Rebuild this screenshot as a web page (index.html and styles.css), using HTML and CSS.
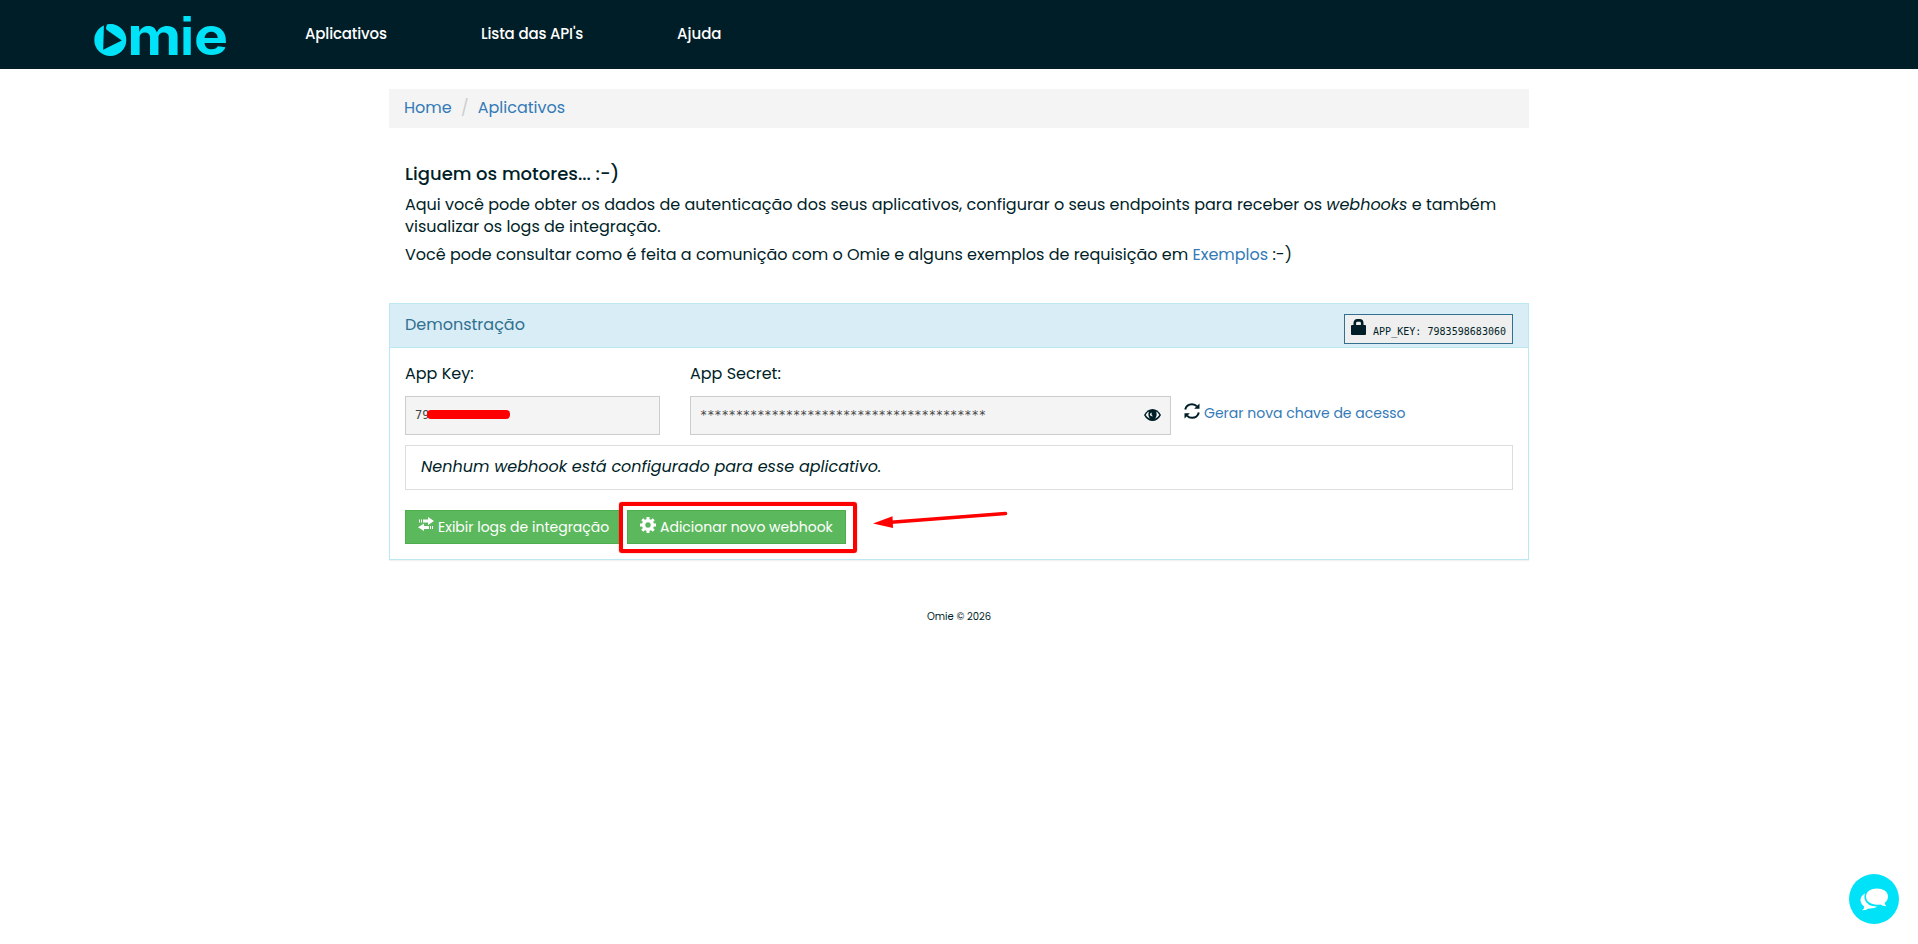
FILE: index.html
```
<!DOCTYPE html>
<html lang="pt-br">
<head>
    <meta charset="UTF-8">
    <title>Omie</title>
    <link rel="stylesheet" href="styles.css">
</head>
<body>
<header class="header">
    <a class="logo" href="#">
        <svg width="136" height="69" viewBox="0 0 136 69">
            <circle cx="16.3" cy="40" r="16" fill="#00e2f7"/>
            <path d="M10 23 L9.2 49.8 L27.8 40.4 L12.6 29.8 Q11 27.5 14 23" fill="#001e27"/>
            <path d="M13 29.6 Q13.4 26 18 24.2 L24 26.4 L27.4 38.9 Z" fill="#00e2f7"/>
            <g class="logo-text" fill="#00e2f7">
                <text x="33.2" y="55" textLength="54" lengthAdjust="spacingAndGlyphs">m</text>
                <text class="logo-i" x="85.8" y="55">i</text>
                <text x="100" y="55" textLength="34" lengthAdjust="spacingAndGlyphs">e</text>
            </g>
        </svg>
    </a>
    <nav class="nav">
        <a class="nav-item nav-apps" href="#">Aplicativos</a>
        <a class="nav-item nav-apis" href="#">Lista das API's</a>
        <a class="nav-item nav-help" href="#">Ajuda</a>
    </nav>
</header>
<div class="container">
    <div class="breadcrumb">
        <a class="crumb-home" href="#">Home</a>
        <span class="sep">/</span>
        <a href="#">Aplicativos</a>
    </div>
    <div class="intro">
        <h4>Liguem os motores... :-)</h4>
        <p>Aqui você pode obter os dados de autenticação dos seus aplicativos, configurar o seus endpoints para receber os <em>webhooks</em> e também<br>visualizar os logs de integração.</p>
        <p>Você pode consultar como é feita a comunição com o Omie e alguns exemplos de requisição em <a href="#">Exemplos</a> :-)</p>
    </div>
    <div class="panel">
        <div class="panel-heading">
            <span class="panel-title">Demonstração</span>
            <div class="key-badge">
                <svg class="lock" width="15" height="16" viewBox="0 0 15 16">
                    <path d="M3.8 7 V4 Q3.8 1.4 6.3 1.4 H8.7 Q11.2 1.4 11.2 4 V7" fill="none" stroke="#001e27" stroke-width="2.6"/>
                    <rect x="0" y="6" width="15" height="10" rx="1" fill="#001e27"/>
                </svg>
                <span>APP_KEY: 7983598683060</span>
            </div>
        </div>
        <div class="panel-body">
            <div class="fields">
                <div class="field field-key">
                    <label>App Key:</label>
                    <div class="input">7983598683060<i class="redact"></i></div>
                </div>
                <div class="field field-secret">
                    <label>App Secret:</label>
                    <div class="input">
                        <span class="stars">****************************************</span>
                        <svg class="eye" width="17" height="12" viewBox="0 0 17 12">
                            <path d="M0 6 C4 -2 13 -2 17 6 C13 14 4 14 0 6 Z" fill="#001e27"/>
                            <path d="M1.7 6 Q3 3.4 4.9 2.5 Q3.4 6.4 6 9.7 Q3.3 8.8 1.7 6 Z M15.3 6 Q14 3.4 12.1 2.5 Q13.6 6.4 11 9.7 Q13.7 8.8 15.3 6 Z" fill="#f4f4f4"/>
                            <path d="M7.6 3.4 Q5.6 4 6 6 Q7 7.7 9 7.2 Q7 5.7 7.6 3.4 Z" fill="#f4f4f4"/>
                        </svg>
                    </div>
                </div>
                <div class="refresh">
                    <svg width="16" height="16" viewBox="0 0 16 16">
                        <path d="M1.2 6.5 Q2.5 1.2 8 1.2 Q11 1.2 13 3.4 M14.8 9.5 Q13.5 14.8 8 14.8 Q5 14.8 3 12.6" fill="none" stroke="#001e27" stroke-width="2"/>
                        <path d="M15.5 0.6 V5.8 H10.2 Z M0.5 15.4 V10.2 H5.8 Z" fill="#001e27"/>
                    </svg>
                    <a href="#">Gerar nova chave de acesso</a>
                </div>
            </div>
            <div class="message">Nenhum webhook está configurado para esse aplicativo.</div>
            <div class="buttons">
                <a class="btn btn-logs" href="#">
                    <svg width="16" height="14" viewBox="0 0 16 14">
                        <path d="M5 2.5 H10 V0 L16 4 L10 8 V5.5 H5 Z M1 2.5 H2 V5.5 H1 Z M3 2.5 H4 V5.5 H3 Z" fill="#fff"/>
                        <path d="M11 9 H6 V6.4 L0 10.2 L6 14 V12 H11 Z M12 9 H13 V12 H12 Z M14 9 H15 V12 H14 Z" fill="#fff"/>
                    </svg>
                    <span>Exibir logs de integração</span>
                </a>
                <a class="btn btn-add" href="#">
                    <svg width="16" height="16" viewBox="0 0 16 16">
                        <circle cx="8" cy="8" r="4.4" fill="none" stroke="#fff" stroke-width="3.4"/>
                        <path d="M8 0 V3 M8 13 V16 M0 8 H3 M13 8 H16 M2.3 2.3 L4.5 4.5 M11.5 11.5 L13.7 13.7 M13.7 2.3 L11.5 4.5 M4.5 11.5 L2.3 13.7" stroke="#fff" stroke-width="3"/>
                    </svg>
                    <span>Adicionar novo webhook</span>
                    <i class="highlight"></i>
                    <svg class="arrow" width="136" height="34" viewBox="0 0 136 34">
                        <path d="M18 20.3 L132.5 11.5" stroke="#f00" stroke-width="3.6" stroke-linecap="round"/>
                        <path d="M0 21.5 L19.5 14.3 L20 26 Z" fill="#f00"/>
                    </svg>
                </a>
            </div>
        </div>
    </div>
    <footer class="footer">Omie © 2026</footer>
</div>
<a class="chat" href="#">
    <svg width="28" height="23" viewBox="0 0 28 23">
        <path d="M5 5.2 Q0 8.5 .5 13 Q1 16.5 4.3 18.8 Q4.3 21 2 22.3 Q6 22.2 8.5 20.4 Q13.5 21 17.5 18.8 Q6.5 18.3 4.6 11 Q4 8 5 5.2 Z" fill="#fff"/>
        <path d="M17 .5 C22.8 .5 28 3.4 28 8.5 Q28 12.4 24.8 14.6 Q24.5 16.7 26.5 18.3 Q22.6 18 20.4 16.4 C12 17.7 6 14 6 8.5 C6 3.4 11.2 .5 17 .5 Z" fill="#fff"/>
    </svg>
</a>
</body>
</html>
```
FILE: styles.css
```
*{
    box-sizing:border-box;
}
html,body{
    margin:0;
    padding:0;
    height:100%;
}
body{
    font-family:Poppins,Inter,sans-serif;
    font-size:16px;
    line-height:22px;
    color:#001e27;
    background-color:#fff;
}
a{
    color:#337ab7;
    text-decoration:none;
}
svg{
    flex:none;
    display:block;
}
.header{
    height:69px;
    background-color:#001e27;
    display:flex;
    padding-left:94px;
}
.logo{
    width:211px;
}
.logo-text{
    font-family:Inter,sans-serif;
    font-size:53px;
    font-weight:700;
}
.logo-i{
    font-family:"Liberation Sans",sans-serif;
}
.nav{
    display:flex;
    gap:94px;
    padding-top:23px;
}
.nav-item{
    color:#fff;
    font-size:15px;
    font-weight:500;
    letter-spacing:-.15px;
    white-space:nowrap;
}
.nav-apps{
    width:82px;
}
.nav-apis{
    width:102px;
}
.nav-help{
    letter-spacing:0;
}
.container{
    width:1140px;
    margin:0 auto;
    padding-top:20px;
}
.breadcrumb{
    height:39px;
    padding:8px 15px;
    background-color:#f4f4f4;
    display:flex;
}
.sep{
    width:26px;
    text-align:center;
    color:#ccc;
}
.intro{
    padding:35px 16px 0;
    height:175px;
    white-space:nowrap;
}
.intro h4{
    margin:0 0 9px;
    font-size:18px;
    font-weight:500;
}
.intro p{
    margin:0 0 6px;
}
.panel{
    border:1px solid #bce8f1;
    height:257px;
    box-shadow:0 1px 1px rgba(0,0,0,.05);
}
.panel-heading{
    height:44px;
    padding:10px 15px 0;
    border-bottom:1px solid #bce8f1;
    background-color:#d9edf7;
    color:#31708f;
    display:flex;
    justify-content:space-between;
}
.key-badge{
    width:169px;
    height:30px;
    padding:4px 6px;
    border:1px solid #31708f;
    background-color:#efefef;
    color:#001e27;
    display:flex;
    gap:7px;
    font:10px/25px "DejaVu Sans Mono",monospace;
    letter-spacing:.03px;
    white-space:nowrap;
}
.panel-body{
    padding:15px 15px 0;
}
.fields{
    display:flex;
}
.field-key{
    width:255px;
    margin-right:30px;
}
.field-secret{
    width:481px;
    margin-right:13px;
}
.field label{
    display:block;
    height:33px;
}
.input{
    position:relative;
    height:39px;
    padding:0 9px 2px;
    border:1px solid #ccc;
    background-color:#f4f4f4;
    color:#444;
    display:flex;
    align-items:center;
    justify-content:space-between;
    font-family:"DejaVu Sans Mono",monospace;
    font-size:12px;
    letter-spacing:-.08px;
}
.redact{
    position:absolute;
    left:21px;
    top:13px;
    width:83px;
    height:9px;
    border-radius:4px;
    background-color:#f00;
}
.refresh{
    padding-top:40px;
    display:flex;
    gap:4px;
    font-size:14px;
    line-height:20px;
    white-space:nowrap;
}
.message{
    height:45px;
    margin-top:10px;
    padding:10px 15px;
    border:1px solid #ddd;
    font-style:italic;
}
.buttons{
    margin-top:20px;
    display:flex;
    gap:5px;
}
.btn{
    position:relative;
    height:34px;
    padding:6px 12px;
    border:1px solid #4cae4c;
    background-color:#5cb85c;
    color:#fff;
    display:flex;
    gap:4px;
    font-size:14px;
    line-height:20px;
    white-space:nowrap;
}
.btn-logs{
    width:217px;
}
.btn-add{
    width:219px;
}
/* marcação vermelha em volta do botão */
.highlight{
    position:absolute;
    left:-9px;
    top:-9px;
    width:238px;
    height:51px;
    border:4px solid #f00;
    border-radius:3px;
    box-shadow:0 0 1px #f00;
}
.arrow{
    position:absolute;
    left:245px;
    top:-9px;
}
.footer{
    padding-top:46px;
    text-align:center;
    font-size:10px;
}
.chat{
    position:fixed;
    right:19px;
    bottom:20px;
    width:50px;
    height:50px;
    border-radius:50%;
    background-color:#00e2f7;
    display:flex;
    align-items:center;
    justify-content:center;
}
```
